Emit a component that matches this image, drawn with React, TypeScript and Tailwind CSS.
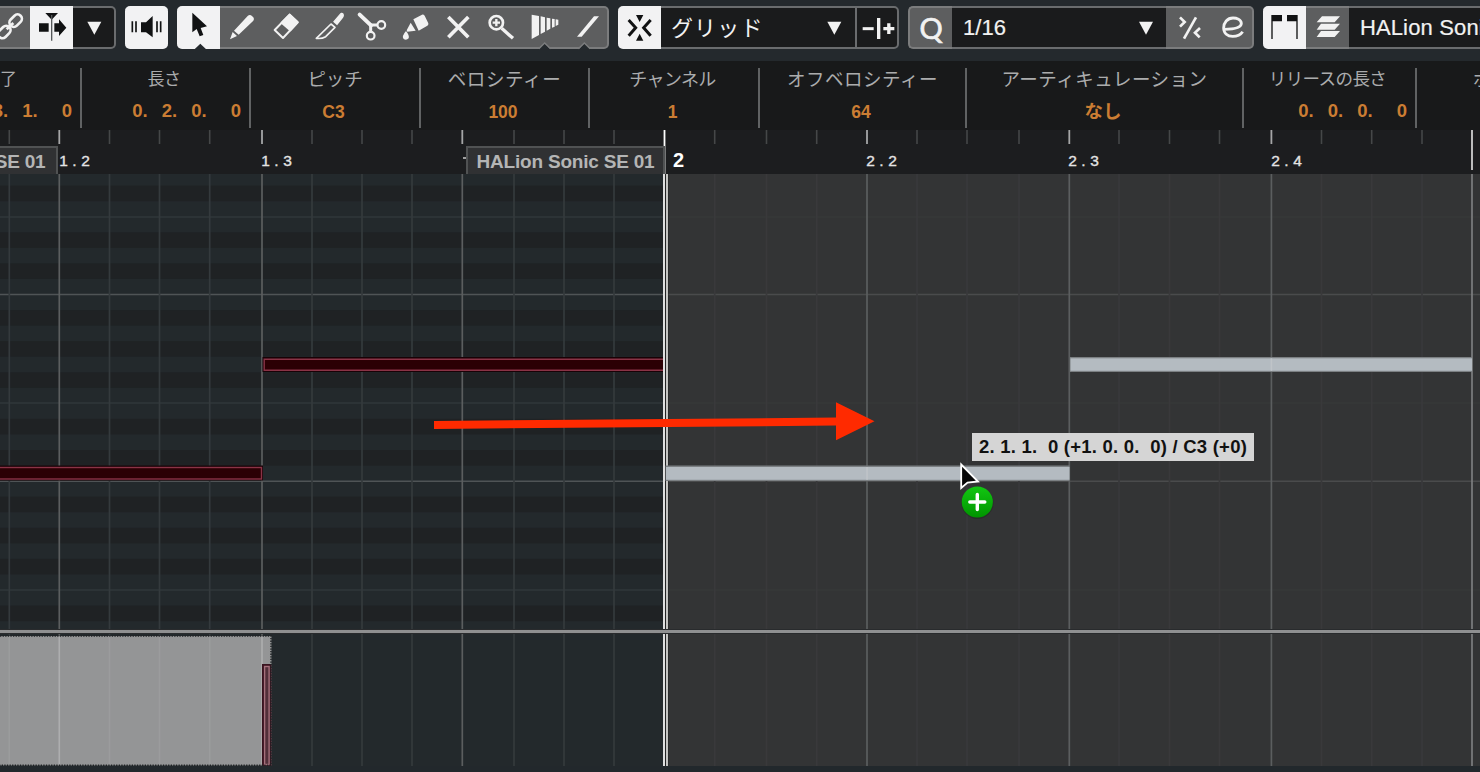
import type { ReactNode } from "react";

const W = "#f2f2f2";
const K = "#111213";

/* ---------- toolbar ---------- */

function Icon({ x, w = 129, children }: { x: number; w?: number; children: ReactNode }) {
  return (
    <svg viewBox={`${x} 18 ${w} 129`} width={w / 3} height={43} className="block shrink-0 overflow-visible">
      {children}
    </svg>
  );
}

const tones = {
  gray: "border-[#7b7c7d] bg-[#5d5e5f]",
  dark: "border-[#6a6c6e] bg-[#1a1b1c]",
  white: "border-[#f2f2f3] bg-[#f2f2f3]",
};

function Cell({
  tone,
  className = "",
  children,
}: {
  tone: keyof typeof tones;
  className?: string;
  children: ReactNode;
}) {
  return (
    <div className={`flex h-[43px] shrink-0 items-center justify-center border-y-2 ${tones[tone]} ${className}`}>
      {children}
    </div>
  );
}

function Notch({ x }: { x: number }) {
  return (
    <>
      <path d={`M${x - 18} 149 L${x} 131 L${x + 18} 149Z`} fill="#24292d" />
      <path d={`M${x - 18} 146 L${x} 129 L${x + 18} 146`} fill="none" stroke="#7b7c7d" strokeWidth={4} />
    </>
  );
}

function Down({ cx }: { cx: number }) {
  return <path d={`M${cx - 21} 65 H${cx + 21} L${cx} 104 Z`} fill={W} />;
}

function Toolbar() {
  const tool = "w-[43.2px]";
  return (
    <div className="-ml-[13px] flex h-[61px] w-[1560px] items-start gap-[9px] bg-[#24292d] pt-[6px]">
      <div className="flex">
        <Cell tone="gray" className="w-[43px]">
          <Icon x={-39}>
            <g fill="none" stroke={W} strokeWidth={8}>
              <rect x={-21} y={-13} width={42} height={26} rx={13} transform="translate(47 62) rotate(-45)" />
              <rect x={-21} y={-13} width={42} height={26} rx={13} transform="translate(13 96) rotate(-45)" />
              <path d="M20 88 L40 69" strokeWidth={8} />
            </g>
          </Icon>
        </Cell>
        <Cell tone="white" className="w-[43px]">
          <Icon x={90}>
            <path d="M117 70H146V95H117Z M136 39H174L155 59Z M163 70H177V58L199 83L177 108V95H163Z" fill={K} />
            <path d="M155 45V122" stroke="#55585a" strokeWidth={4} />
          </Icon>
        </Cell>
        <Cell tone="dark" className="w-[43px] rounded-r-[5px] border-r-2">
          <Icon x={220}>
            <Down cx={287} />
          </Icon>
        </Cell>
      </div>

      <Cell tone="white" className="w-[43px] rounded-[5px]">
        <Icon x={375}>
          <path d="M423 67H438L458 48V112L438 97H423Z" fill={K} />
          <path d="M397 64V97M408 64V97M471 64V97M482 64V97" stroke={K} strokeWidth={5} />
        </Icon>
      </Cell>

      <div className="flex">
        <Cell tone="white" className={`${tool} rounded-l-[5px]`}>
          <Icon x={531}>
            <path d="M577 38V97L590 87L599 109L610 105L602 84L621 79Z" fill={K} />
            <path d="M582 149L601 131L620 149Z" fill="#24292d" />
          </Icon>
        </Cell>
        <Cell tone="gray" className={tool}>
          <Icon x={661}>
            <path d="M703 92L744 48Q749 43 754 46L761 52Q765 57 761 62L717 104Z M699 96L712 108L691 118Z" fill={W} />
          </Icon>
        </Cell>
        <Cell tone="gray" className={tool}>
          <Icon x={790}>
            <g strokeLinejoin="round" stroke={W} strokeWidth={6}>
              <path d="M870 44L894 67L850 114L825 90Z" fill="none" />
              <path d="M870 44L894 67L872 91L846 68Z" fill={W} />
            </g>
          </Icon>
        </Cell>
        <Cell tone="gray" className={tool}>
          <Icon x={920}>
            <path d="M1001 65L1019 44Q1024 38 1027 41Q1031 46 1026 53L1010 73Z" fill={W} stroke={W} strokeWidth={4} />
            <path d="M992 72L1004 82L976 110Q964 117 948 115Z" fill="none" stroke={W} strokeWidth={5} strokeLinejoin="round" />
          </Icon>
        </Cell>
        <Cell tone="gray" className={tool}>
          <Icon x={-30}>
            <g fill="none" stroke={W}>
              <path d="M-1 44L33 76" strokeWidth={12} strokeLinecap="round" />
              <path d="M30 75H51M32 74V94" strokeWidth={9} />
              <circle cx={64} cy={75} r={11.5} strokeWidth={6.5} />
              <circle cx={32} cy={107} r={11.5} strokeWidth={6.5} />
            </g>
          </Icon>
        </Cell>
        <Cell tone="gray" className={tool}>
          <Icon x={99}>
            <path
              d="M160 58L186 44Q191 43 194 47L205 70Q206 75 202 77L176 92Z M152 68L167 92L142 95L140 91Z M138 93Q149 106 146 115Q139 122 131 117Q124 109 138 93Z"
              fill={W}
            />
          </Icon>
        </Cell>
        <Cell tone="gray" className={tool}>
          <Icon x={229}>
            <path d="M266 51L326 112M326 51L266 112" stroke={W} strokeWidth={11} />
          </Icon>
        </Cell>
        <Cell tone="gray" className={tool}>
          <Icon x={359}>
            <g fill="none" stroke={W}>
              <circle cx={411} cy={68} r={20} strokeWidth={8} />
              <path d="M427 85L461 115" strokeWidth={10} />
              <path d="M411 57V79M400 68H422" strokeWidth={7} />
            </g>
          </Icon>
        </Cell>
        <Cell tone="gray" className={tool}>
          <Icon x={488}>
            <path
              d="M514 44L536 48V105L514 117Z M541 49L554 52V95L541 102Z M559 53L570 55V86L559 92Z M575 56L583 57V80L575 83Z M586 58L594 59V74L586 78Z"
              fill={W}
            />
            <Notch x={553} />
          </Icon>
        </Cell>
        <Cell tone="gray" className={`${tool} rounded-r-[5px] border-r-2`}>
          <Icon x={619}>
            <path d="M706 49H721L669 110H655Z" fill={W} />
            <Notch x={677} />
          </Icon>
        </Cell>
      </div>

      <div className="flex">
        <Cell tone="white" className="w-[43px] rounded-l-[5px]">
          <Icon x={774}>
            <path d="M828 45H850L839 66Z M828 122H850L839 101Z" fill={K} />
            <path d="M806 60L827 83L806 107M872 60L851 83L872 107" fill="none" stroke={K} strokeWidth={9} />
          </Icon>
        </Cell>
        <Cell tone="dark" className="w-[194px]">
          <span className="grow pb-[3px] pl-[10px] text-[22px] leading-none tracking-[1.2px] text-[#f2f2f2] font-['Noto_Sans_CJK_JP',sans-serif]">
            グリッド
          </span>
          <Icon x={300} w={105}>
            <Down cx={343} />
          </Icon>
        </Cell>
        <Cell tone="dark" className="w-[44.5px] rounded-r-[5px] border-x-2">
          <Icon x={409}>
            <path d="M429 86H462" stroke={W} strokeWidth={9} />
            <path d="M477 54V117" stroke={W} strokeWidth={10} />
            <path d="M491 86H524M507.500 70V102" stroke={W} strokeWidth={10} />
          </Icon>
        </Cell>
      </div>

      <div className="flex">
        <Cell tone="gray" className="w-[43.5px] rounded-l-[5px] border-l-2">
          <span className="text-[29px] font-normal leading-none text-[#f2f2f2] [-webkit-text-stroke:0.7px_#f2f2f2] font-['Lato',sans-serif]">
            Q
          </span>
        </Cell>
        <Cell tone="dark" className="w-[214px]">
          <span className="grow pl-[11px] text-[22px] leading-none tracking-[0.1px] text-[#f2f2f2] [-webkit-text-stroke:0.2px_#f2f2f2] font-['Liberation_Sans',sans-serif]">
            1/16
          </span>
          <Icon x={93} w={105}>
            <Down cx={138} />
          </Icon>
        </Cell>
        <Cell tone="gray" className="w-[44px]">
          <Icon x={198} w={132}>
            <g fill="none" stroke={W}>
              <path d="M288 52L252 116" strokeWidth={8} />
              <path d="M240 52L254 66L240 80M300 84L285 98L299 112" strokeWidth={8} />
            </g>
          </Icon>
        </Cell>
        <Cell tone="gray" className="w-[44px] rounded-r-[5px] border-r-2">
          <Icon x={330} w={132}>
            <path
              d="M376 88C400 88 427 84 427 70C426 59 413 54 402 54C385 54 374 68 374 84C374 100 386 109 401 109C414 109 425 104 431 95"
              fill="none"
              stroke={W}
              strokeWidth={8.5}
            />
          </Icon>
        </Cell>
      </div>

      <div className="flex">
        <Cell tone="white" className="w-[43px] rounded-l-[5px]">
          <Icon x={489}>
            <path d="M514 45H546V64H518V117H514Z M561 45H593V117H589V64H561Z" fill={K} />
          </Icon>
        </Cell>
        <Cell tone="gray" className="w-[43px]">
          <Icon x={619}>
            <path d="M667 49H721L705 67H651Z M664 71H721L705 89H651Z M664 93H721L705 111H651Z" fill={W} />
          </Icon>
        </Cell>
        <Cell tone="dark" className="w-[220px]">
          <span className="grow whitespace-nowrap pl-[11px] text-[22px] leading-none tracking-[0.15px] text-[#f2f2f2] [-webkit-text-stroke:0.2px_#f2f2f2] font-['Liberation_Sans',sans-serif]">
            HALion Sonic SE
          </span>
        </Cell>
      </div>
    </div>
  );
}

/* ---------- info line ---------- */

function Info({ label, width, spacing, children }: { label: string; width: string; spacing: string; children: ReactNode }) {
  return (
    <div className={`flex h-[60px] shrink-0 flex-col items-center border-r-2 border-[#606263] ${width}`}>
      <div className={`-mt-px flex h-[22px] items-center whitespace-nowrap leading-none text-[#abacad] font-['Noto_Sans_CJK_JP',sans-serif] ${spacing}`}>
        {label}
      </div>
      <div className="flex h-[40px] w-full items-center justify-center pr-[3px] pt-[8px] text-[17.5px] font-bold leading-none text-[#cb7d33] font-['Liberation_Sans','Noto_Sans_CJK_JP',sans-serif]">
        {children}
      </div>
    </div>
  );
}

function Position({ parts }: { parts: string[] }) {
  return (
    <div className="-mt-[2px] flex w-full justify-end pr-[5px] text-[18.5px]">
      <span className="w-[29.500px]">{parts[0]}.</span>
      <span className="w-[29.500px]">{parts[1]}.</span>
      <span className="w-[39.500px]">{parts[2]}.</span>
      <span>{parts[3]}</span>
    </div>
  );
}

function InfoLine() {
  return (
    <div className="-ml-[88px] flex h-[69px] w-[1700px] items-start bg-[#18191a] pt-[7px]">
      <Info label="終了" width="w-[170px]" spacing="pl-[8px] text-[17px]">
        <Position parts={["1", "3", "1", "0"]} />
      </Info>
      <Info label="長さ" width="w-[169px]" spacing="text-[17px] tracking-[-0.4px] pr-[3px]">
        <Position parts={["0", "2", "0", "0"]} />
      </Info>
      <Info label="ピッチ" width="w-[170px]" spacing="text-[18.5px] tracking-[-0.2px]">C3</Info>
      <Info label="ベロシティー" width="w-[169px]" spacing="text-[18.5px] tracking-[0.6px]">100</Info>
      <Info label="チャンネル" width="w-[170px]" spacing="text-[18px] tracking-[-0.6px] pr-[3px]">1</Info>
      <Info label="オフベロシティー" width="w-[207px]" spacing="text-[18.5px] tracking-[0.5px]">64</Info>
      <Info label="アーティキュレーション" width="w-[277px]" spacing="text-[18.5px] tracking-[0.5px]">
        <span className="text-[18.500px]">なし</span>
      </Info>
      <Info label="リリースの長さ" width="w-[173px]" spacing="text-[17.5px] tracking-[-0.6px] pr-[4px]">
        <Position parts={["0", "0", "0", "0"]} />
      </Info>
      <Info label="ボイシング" width="w-[194px]" spacing="text-[18px] tracking-[1px] pl-[15px]">なし</Info>
    </div>
  );
}

/* ---------- ruler ---------- */

const beats = [59.3, 262, 462.3, 664.5, 867, 1069.3, 1271.4, 1472];
const steps = [
  9.3, 109.5, 159.5, 209.7, 312, 362, 412, 514, 564, 614, 714.7, 766.5, 816.7, 917, 967, 1019, 1119, 1169.5, 1219.5,
  1321.5, 1371.7, 1422,
];

function Beat({ text, left }: { text: string; left: string }) {
  return (
    <div
      className={`absolute top-[23px] flex text-[15.5px] leading-none text-[#e4e4e4] [-webkit-text-stroke:0.35px_#e4e4e4] font-['Liberation_Sans',sans-serif] ${left}`}
    >
      {text.split("").map((c, i) => (
        <span key={i} className="w-[11px] text-center">
          {c}
        </span>
      ))}
    </div>
  );
}

function PartTag({ place }: { place: string }) {
  return (
    <div
      className={`absolute top-[16px] flex h-[28px] w-[199px] items-center justify-center whitespace-nowrap border-x-2 border-t-2 border-[#505253] bg-[#303133] text-[19px] font-bold leading-none tracking-[-0.2px] text-[#b4b5b5] font-['Liberation_Sans',sans-serif] ${place}`}
    >
      HALion Sonic SE 01
    </div>
  );
}

function Ruler() {
  return (
    <div className="relative h-[44px] overflow-hidden bg-[#1c1d1f]">
      <svg width={1480} height={44} className="block">
        {steps.map((x) => (
          <path key={x} d={`M${x} 0V14`} stroke="#454748" strokeWidth={1.6} />
        ))}
        {beats.map((x, i) => (
          <path
            key={x}
            d={`M${x} 0V${i === 7 ? 40 : i === 3 ? 44 : 14}`}
            stroke={i === 3 ? "#ffffff" : i === 7 ? "#d0d0d0" : "#a5a6a7"}
            strokeWidth={1.8}
          />
        ))}
        <path d="M463 28H466" stroke="#cccccc" strokeWidth={1.5} />
      </svg>
      <PartTag place="-left-[141px] pr-[4px]" />
      <PartTag place="left-[466px]" />
      <Beat text="1.2" left="left-[58px]" />
      <Beat text="1.3" left="left-[260px]" />
      <Beat text="2.2" left="left-[865px]" />
      <Beat text="2.3" left="left-[1067px]" />
      <Beat text="2.4" left="left-[1270px]" />
      <div className="absolute left-[673px] top-[20px] text-[20px] font-bold leading-none text-white font-['Liberation_Sans',sans-serif]">2</div>
    </div>
  );
}

/* ---------- note editor ---------- */

const ROW = 15.55;
const TOP = 294.5 - 12 * ROW;
const blackKeys = [1, 3, 5, 8, 10];

function Grid({ y0, y1, rows }: { y0: number; y1: number; rows?: boolean }) {
  return (
    <svg viewBox={`0 ${y0} 1480 ${y1 - y0}`} width={1480} height={y1 - y0} className="block">
      <rect y={y0} width={664} height={y1 - y0} fill="#23292c" />
      {rows &&
        [0, 1, 2].map((o) =>
          blackKeys.map((k) => (
            <rect key={`${o}-${k}`} y={TOP + (o * 12 + k) * ROW} width={664} height={ROW} fill="#1f2224" />
          )),
        )}
      <rect x={664} y={y0} width={816} height={y1 - y0} fill="#333435" />
      {rows && (
        <g strokeWidth={1.5}>
          <path d="M0 217H664M0 403H664M0 590H664" stroke="#30373a" />
          <path d="M664 217H1480M664 403H1480M664 590H1480" stroke="#373839" />
          <path d="M0 294.600H664M0 481.200H664" stroke="#4f5456" />
          <path d="M664 294.600H1480M664 481.200H1480" stroke="#4a4b4c" />
        </g>
      )}
      {steps.map((x) => (
        <path key={x} d={`M${x} ${y0}V${y1}`} stroke={x < 664 ? "#343a3d" : "#39393b"} strokeWidth={1.7} />
      ))}
      {beats.map((x) => (
        <path key={x} d={`M${x} ${y0}V${y1}`} stroke={x > 1400 ? "#7d7e7f" : "#5b5e5f"} strokeWidth={1.7} />
      ))}
      <rect x={663} y={y0} width={5.5} height={y1 - y0} fill="#222324" />
      <path d={`M664 ${y0}V${y1}`} stroke="#f4f4f4" strokeWidth={1.8} />
      <path d={`M667 ${y0}V${y1}`} stroke="#c4c4c2" strokeWidth={2} />
    </svg>
  );
}

function Editor() {
  return (
    <div className="relative h-[455px] overflow-hidden">
      <Grid y0={174} y1={629} rows />
      <svg viewBox="0 174 1480 455" width={1480} height={455} className="absolute inset-0">
        <g>
          <rect x={-10} y={465.500} width={273} height={15} fill="#180206" />
          <rect x={-9} y={467.500} width={270.500} height={11.500} fill="#2b0004" stroke="#8a3346" strokeWidth={1.4} />
          <rect x={262.500} y={357} width={400.500} height={15} fill="#180206" />
          <path d="M663 359.200H264.200V370.200H663" fill="#2b0004" stroke="#8a3346" strokeWidth={1.4} />
        </g>
        <g>
          <rect x={665.500} y={465.500} width={404} height={15.500} fill="#7c8083" />
          <rect x={666} y={467} width={403.500} height={12.800} fill="#b4bbc1" />
          <path d="M867 467V479.800" stroke="#bfc4c8" strokeWidth={1.6} />
          <rect x={1070} y={357} width={402} height={15} fill="#7c8083" />
          <rect x={1070.500} y={358.300} width={401.500} height={12.500} fill="#b4bbc1" />
          <path d="M1271.400 358.300V370.800" stroke="#bfc4c8" strokeWidth={1.6} />
        </g>
        <path d="M434 421L836 417.500V402.300L874.500 421.200L836 440.300V425.500L434 429Z" fill="#ff2a00" />
      </svg>
      <div className="absolute left-[972px] top-[259px] flex h-[28px] w-[282px] items-center justify-center whitespace-pre bg-[#d5d5d5] text-[18.500px] font-bold leading-none tracking-[0.22px] text-[#111111] font-['Liberation_Sans',sans-serif]">
        {"2. 1. 1.  0 (+1. 0. 0.  0) / C3 (+0)"}
      </div>
      <svg viewBox="955 458 45 65" width={45} height={65} className="absolute left-[955px] top-[284px]">
        <defs>
          <linearGradient id="copy-badge" x1="0" y1="0" x2="0" y2="1">
            <stop offset="0" stopColor="#12c712" />
            <stop offset="1" stopColor="#009400" />
          </linearGradient>
        </defs>
        <path d="M961.200 464.500V488L967.500 482.500L978 481.500Z" fill="#060606" stroke="#ffffff" strokeWidth={1.8} />
        <circle cx={977.500} cy={503} r={16} fill="#1d2a1d" opacity={0.5} />
        <circle cx={977.300} cy={502} r={15.600} fill="url(#copy-badge)" />
        <path d="M977.300 494.500V509.500M969.800 502H984.800" stroke="#ffffff" strokeWidth={3.4} strokeLinecap="round" />
      </svg>
    </div>
  );
}

function VelocityLane() {
  return (
    <div className="relative h-[132px] overflow-hidden">
      <Grid y0={634} y1={766} />
      <svg viewBox="0 634 1480 132" width={1480} height={132} className="absolute inset-0">
        <rect x={0} y={636} width={271.500} height={129.500} fill="#949596" />
        {[9.3, 109.5, 159.5, 209.7].map((x) => (
          <path key={x} d={`M${x} 636V765`} stroke="#9b9c9d" strokeWidth={1.6} />
        ))}
        <path d="M59.300 636V765M262 636V765" stroke="#adaeaf" strokeWidth={1.6} />
        <rect x={262} y={664} width={9.500} height={102} fill="#3a1420" />
        <rect x={264.600} y={666.500} width={4.500} height={98} fill="#52303a" stroke="#a5707c" strokeWidth={1.4} />
        <path d="M0 636H271V765.200H0" fill="none" stroke="#1f2224" strokeWidth={1.5} strokeDasharray="1.300 1.300" />
      </svg>
    </div>
  );
}

export default function App() {
  return (
    <div className="flex h-[772px] w-[1480px] flex-col overflow-hidden bg-[#22282c]">
      <Toolbar />
      <InfoLine />
      <Ruler />
      <Editor />
      <div className="h-[5px] shrink-0 border-y border-[#292b2d] bg-[#8f9091]" />
      <VelocityLane />
    </div>
  );
}
